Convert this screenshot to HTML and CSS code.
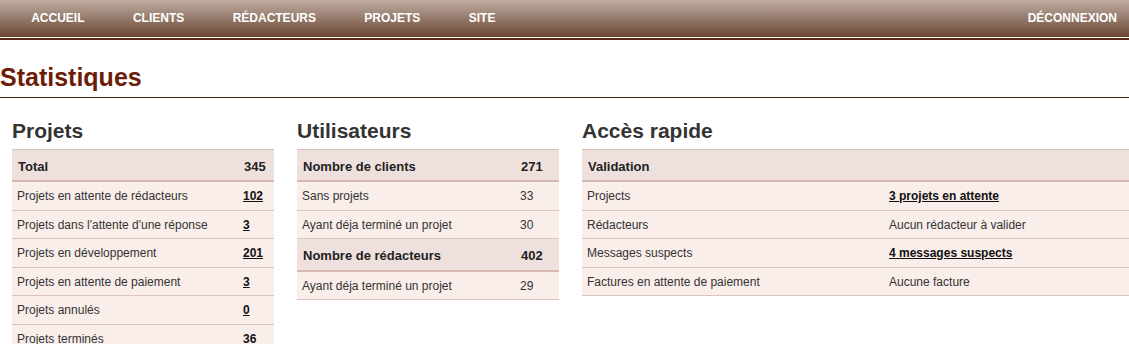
FILE: index.html
```html
<!DOCTYPE html>
<html lang="fr">
  <head>
    <meta charset="UTF-8" />
    <title>Statistiques</title>
    <link rel="stylesheet" href="styles.css">
  </head>
  <body>
    <div class="topbar">
      <ul class="menu">
        <li><a href="#">Accueil</a></li>
        <li><a href="#">Clients</a></li>
        <li><a href="#">Rédacteurs</a></li>
        <li><a href="#">Projets</a></li>
        <li><a href="#">Site</a></li>
        <li class="logout"><a href="#">Déconnexion</a></li>
      </ul>
    </div>

    <h1 class="page-title">Statistiques</h1>

    <div class="columns">
      <div class="col">
        <h2>Projets</h2>
        <table class="stats stats-projets">
          <tr class="head"><td>Total</td><td class="num">345</td></tr>
          <tr><td>Projets en attente de rédacteurs</td><td class="num"><a href="#">102</a></td></tr>
          <tr><td>Projets dans l'attente d'une réponse</td><td class="num"><a href="#">3</a></td></tr>
          <tr><td>Projets en développement</td><td class="num"><a href="#">201</a></td></tr>
          <tr><td>Projets en attente de paiement</td><td class="num"><a href="#">3</a></td></tr>
          <tr><td>Projets annulés</td><td class="num"><a href="#">0</a></td></tr>
          <tr><td>Projets terminés</td><td class="num"><b>36</b></td></tr>
        </table>
      </div>

      <div class="col">
        <h2>Utilisateurs</h2>
        <table class="stats stats-users">
          <tr class="head"><td>Nombre de clients</td><td class="num">271</td></tr>
          <tr><td>Sans projets</td><td class="num">33</td></tr>
          <tr><td>Ayant déja terminé un projet</td><td class="num">30</td></tr>
          <tr class="head"><td>Nombre de rédacteurs</td><td class="num">402</td></tr>
          <tr><td>Ayant déja terminé un projet</td><td class="num">29</td></tr>
        </table>
      </div>

      <div class="col">
        <h2>Accès rapide</h2>
        <table class="stats stats-quick">
          <tr class="head"><td colspan="2">Validation</td></tr>
          <tr><td class="label">Projects</td><td><a href="#">3 projets en attente</a></td></tr>
          <tr><td class="label">Rédacteurs</td><td>Aucun rédacteur à valider</td></tr>
          <tr><td class="label">Messages suspects</td><td><a href="#">4 messages suspects</a></td></tr>
          <tr><td class="label">Factures en attente de paiement</td><td>Aucune facture</td></tr>
        </table>
      </div>
    </div>
  </body>
</html>
```

FILE: styles.css
```css
body {
  margin: 0;
  font-family: "Liberation Sans", Arial, sans-serif;
  color: #333;
  background: #fff;
  overflow: hidden;
}

/* Top menu bar */
.topbar {
  border-bottom: 2px solid #5a2a16;
}

.menu {
  list-style: none;
  margin: 0;
  padding: 0 12px 0 7px;
  display: flex;
  height: 37px;
  background: linear-gradient(#bfada3, #6a4633);
  border-bottom: 1px solid #fff;
}

.menu a {
  display: block;
  padding: 0 24.2px;
  line-height: 37px;
  color: #fff;
  font-size: 12px;
  font-weight: bold;
  text-transform: uppercase;
  text-decoration: none;
}

.menu .logout {
  margin-left: auto;
}

.menu .logout a {
  padding-right: 0;
}

/* Page title */
.page-title {
  margin: 23px 0 0 0;
  padding-bottom: 5px;
  font-size: 25px;
  line-height: 29px;
  color: #6b1d08;
  border-bottom: 1px solid #4a1e0e;
}

/* Three columns */
.columns {
  display: grid;
  grid-template-columns: 262px 262px 1fr;
  gap: 23px;
  padding-left: 12px;
}

.col h2 {
  margin: 21px 0 6px 0;
  font-size: 21px;
  line-height: 24px;
  color: #333;
}

.stats {
  width: 100%;
  border-collapse: collapse;
  font-size: 12px;
}

.stats td {
  height: 27px;
  padding: 0 5px;
  background: #f9eeea;
  border-bottom: 1px solid #dcc4bb;
  vertical-align: middle;
  line-height: 14px;
}

/* rows alternate 28/27px so the pitch matches the 28.5px rhythm */
.stats tr:nth-child(even) td {
  height: 28px;
}

.stats .head td {
  height: 27px;
  padding: 3px 5px 0 6px;
  background: #eee0dc;
  border-top: 1px solid #d9bfb6;
  border-bottom: 2px solid #d5b8ae;
  font-size: 13px;
  font-weight: bold;
  color: #222;
}

.stats a {
  color: #111;
  font-weight: bold;
}

.stats b {
  color: #111;
}

.stats-projets .num {
  width: 25px;
}

.stats-users .num {
  width: 33px;
}

.stats-quick .label {
  width: 292px;
}
```
